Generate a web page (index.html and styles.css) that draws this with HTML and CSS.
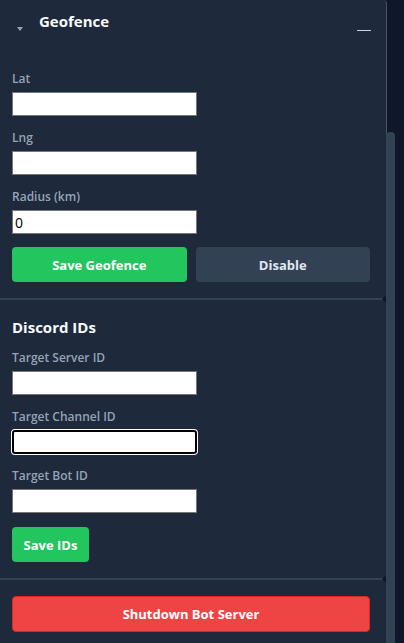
FILE: index.html
```html
<!DOCTYPE html>
<html>
<head>
<meta charset="utf-8">
<link rel="stylesheet" href="styles.css">
</head>
<body>
<div class="frame">
  <aside class="panel">
    <div class="panel-head">
      <span class="caret"></span>
      <h2 class="panel-title">Geofence</h2>
      <span class="minimize"></span>
    </div>
    <section class="section section-geo">
      <div class="field">
        <label class="label">Lat</label>
        <input class="input" type="text">
      </div>
      <div class="field">
        <label class="label">Lng</label>
        <input class="input" type="text">
      </div>
      <div class="field">
        <label class="label">Radius (km)</label>
        <input class="input" type="text" value="0">
      </div>
      <div class="btn-row">
        <button class="btn btn-green btn-grow">Save Geofence</button>
        <button class="btn btn-slate btn-grow">Disable</button>
      </div>
    </section>
    <div class="divider"></div>
    <section class="section section-ids">
      <h3 class="section-title">Discord IDs</h3>
      <div class="field">
        <label class="label">Target Server ID</label>
        <input class="input" type="text">
      </div>
      <div class="field">
        <label class="label">Target Channel ID</label>
        <input class="input input-focus" type="text">
      </div>
      <div class="field">
        <label class="label">Target Bot ID</label>
        <input class="input" type="text">
      </div>
      <button class="btn btn-green btn-small">Save IDs</button>
    </section>
    <div class="divider"></div>
    <section class="section section-danger">
      <button class="btn btn-red btn-full">Shutdown Bot Server</button>
    </section>
  </aside>
  <div class="scroll-track"><div class="scroll-thumb"></div></div>
</div>
</body>
</html>
```

FILE: styles.css
```css
* { box-sizing: border-box; }
html, body { margin: 0; padding: 0; }
body {
  background: #0f172a;
  font-family: "Open Sans", "Noto Sans", sans-serif;
  width: 404px;
  height: 643px;
  overflow: hidden;
}
.frame {
  display: flex;
  height: 643px;
}
.panel {
  width: 387px;
  flex: none;
  background: #1e293b;
  border-right: 1px solid #475569;
  border-top-right-radius: 4px;
  height: 643px;
  overflow: hidden;
}
.panel-head {
  display: flex;
  align-items: flex-start;
  height: 59px;
}
.caret {
  margin: 27px 0 0 17px;
  width: 0;
  height: 0;
  border-left: 3px solid transparent;
  border-right: 3px solid transparent;
  border-top: 4px solid #94a3b8;
}
.panel-title {
  margin: 11px 0 0 16px;
  font-size: 15px;
  line-height: 20px;
  font-weight: 700;
  color: #f8fafc;
}
.minimize {
  margin: 30px 15px 0 auto;
  width: 14px;
  height: 1px;
  background: #cbd5e1;
}
.section {
  padding: 0 16px 0 12px;
}
.section-geo { padding-top: 12px; padding-bottom: 16px; }
.section-ids { padding-top: 17px; padding-bottom: 16px; }
.section-danger { padding-top: 16px; }
.divider {
  position: relative;
  height: 2px;
  background: #334155;
  margin-right: 2px;
}
.divider::after {
  content: "";
  position: absolute;
  right: -2px;
  top: -3px;
  border-top: 4px solid transparent;
  border-bottom: 4px solid transparent;
  border-right: 4px solid #0f172a;
}
.section-title {
  margin: 0 0 13px;
  font-size: 15px;
  line-height: 20px;
  font-weight: 700;
  color: #f8fafc;
}
.field {
  display: flex;
  flex-direction: column;
  align-items: flex-start;
  margin-bottom: 14px;
}
.label {
  font-size: 12px;
  line-height: 16px;
  font-weight: 600;
  color: #94a3b8;
  margin-bottom: 5px;
}
.input {
  width: 185px;
  height: 24px;
  border: 1px solid #767676;
  background: #fff;
  padding: 1px 2px;
  font-family: "Open Sans", "Noto Sans", sans-serif;
  font-size: 14px;
  color: #000;
  border-radius: 0;
  outline: none;
}
.input-focus {
  border: 2px solid #000;
  border-radius: 3px;
  box-shadow: 0 0 0 1px #fff;
}
.btn-row {
  display: flex;
  gap: 9px;
  margin-top: -1px;
}
.btn {
  font-family: "Open Sans", "Noto Sans", sans-serif;
  font-size: 13px;
  font-weight: 700;
  color: #fff;
  border: none;
  border-radius: 4px;
  height: 35px;
  padding: 0 12px;
  cursor: pointer;
}
.btn-grow { flex: 1; }
.btn-green { background: #22c55e; }
.btn-slate { background: #334155; color: #e2e8f0; }
.btn-small { width: 77px; padding: 0; }
.btn-red {
  background: #ef4444;
  border: 1px solid #dc2626;
}
.btn-full { width: 100%; height: 36px; }
.scroll-track {
  width: 9px;
  margin-left: -1px;
  padding-top: 132px;
  display: flex;
}
.scroll-thumb {
  width: 9px;
  background: #334155;
  border-radius: 4px 4px 0 0;
}
```
